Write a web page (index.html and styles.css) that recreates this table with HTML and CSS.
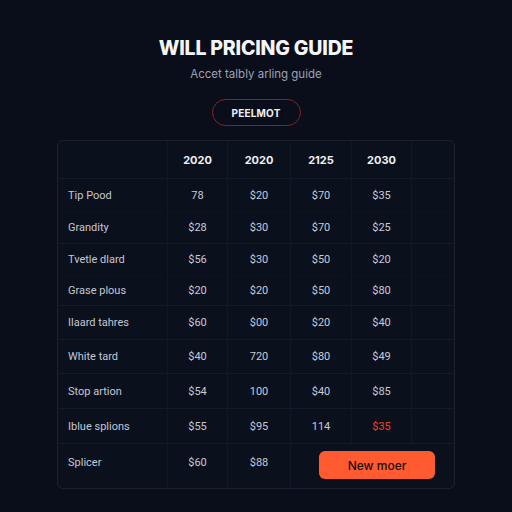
FILE: index.html
```html
<!DOCTYPE html>
<html lang="en">
<head>
<meta charset="utf-8">
<title>Will Pricing Guide</title>
<link rel="stylesheet" href="styles.css">
</head>
<body>
<main class="page">
  <header class="hero">
    <h1 class="title">WILL PRICING GUIDE</h1>
    <p class="subtitle">Accet talbly arling guide</p>
    <button class="pill" type="button">PEELMOT</button>
  </header>
  <table class="grid">
    <colgroup>
      <col class="c-label"><col class="c-a"><col class="c-b"><col class="c-c"><col class="c-d"><col class="c-e">
    </colgroup>
    <thead>
      <tr class="r-head"><th></th><th>2020</th><th>2020</th><th>2125</th><th>2030</th><th></th></tr>
    </thead>
    <tbody>
      <tr class="r1 soft"><td class="lbl">Tip Pood</td><td>78</td><td>$20</td><td>$70</td><td>$35</td><td></td></tr>
      <tr class="r2"><td class="lbl">Grandity</td><td>$28</td><td>$30</td><td>$70</td><td>$25</td><td></td></tr>
      <tr class="r3 soft"><td class="lbl">Tvetle dlard</td><td>$56</td><td>$30</td><td>$50</td><td>$20</td><td></td></tr>
      <tr class="r4"><td class="lbl">Grase plous</td><td>$20</td><td>$20</td><td>$50</td><td>$80</td><td></td></tr>
      <tr class="r5"><td class="lbl">Ilaard tahres</td><td>$60</td><td>$00</td><td>$20</td><td>$40</td><td></td></tr>
      <tr class="r6"><td class="lbl">White tard</td><td>$40</td><td>720</td><td>$80</td><td>$49</td><td></td></tr>
      <tr class="r7"><td class="lbl">Stop artion</td><td>$54</td><td>100</td><td>$40</td><td>$85</td><td></td></tr>
      <tr class="r8"><td class="lbl">Iblue splions</td><td>$55</td><td>$95</td><td>114</td><td class="alert">$35</td><td></td></tr>
      <tr class="r9"><td class="lbl">Splicer</td><td>$60</td><td>$88</td><td colspan="3" class="action"><button class="cta" type="button">New moer</button></td></tr>
    </tbody>
  </table>
</main>
</body>
</html>
```

FILE: styles.css
```css
html, body {
  margin: 0;
  padding: 0;
  background: #0a0e1a;
}

.page {
  width: 512px;
  height: 512px;
  display: flex;
  flex-direction: column;
  align-items: center;
  font-family: "Inter", "Liberation Sans", sans-serif;
  color: #e8eaf0;
}

.hero {
  display: flex;
  flex-direction: column;
  align-items: center;
  padding-top: 36px;
}

.title {
  margin: 0;
  font-size: 19.5px;
  line-height: 24px;
  font-weight: 800;
  letter-spacing: -0.2px;
  color: #f4f5f8;
}

.subtitle {
  margin: 7px 0 0;
  font-size: 11.5px;
  line-height: 14px;
  color: #9ca1b2;
}

.pill {
  margin-top: 18px;
  width: 89px;
  height: 27px;
  border: 1.5px solid #8c1d29;
  border-radius: 14px;
  background: transparent;
  color: #f0f1f4;
  font-family: "Inter", "Liberation Sans", sans-serif;
  font-size: 10px;
  font-weight: 700;
  letter-spacing: 0.2px;
  padding: 0;
}

.grid {
  margin-top: 14px;
  width: 398px;
  border-collapse: separate;
  border-spacing: 0;
  border: 1px solid #1b2130;
  border-radius: 6px;
  background: #0b101d;
  table-layout: fixed;
  font-family: "Roboto", "Liberation Sans", sans-serif;
}

.c-label { width: 110px; }
.c-a { width: 60px; }
.c-b { width: 63px; }
.c-c { width: 61px; }
.c-d { width: 60px; }
.c-e { width: 42px; }

.grid th,
.grid td {
  padding: 0;
  text-align: center;
  border-bottom: 1px solid #141a28;
  border-right: 1px solid #111726;
}

.grid th:last-child,
.grid td:last-child {
  border-right: none;
}

.grid th {
  height: 37px;
  font-family: "Inter", "Liberation Sans", sans-serif;
  font-size: 11px;
  font-weight: 700;
  color: #eef0f4;
}

.grid td {
  font-size: 11px;
  color: #c7cbd6;
}

.grid td.lbl {
  text-align: left;
  padding-left: 10px;
  color: #c4c8d3;
}

.soft td { border-bottom-color: #0e1321; }

.r1 td { height: 32px; }
.r2 td { height: 31px; }
.r3 td { height: 31px; }
.r4 td { height: 29px; }
.r5 td { height: 33px; }
.r6 td { height: 33px; }
.r7 td { height: 34px; }
.r8 td { height: 34px; }
.r9 td {
  height: 44px;
  border-bottom: none;
  vertical-align: top;
  padding-top: 12px;
  box-sizing: border-box;
}

.grid td.alert {
  color: #f0432b;
}

.grid td.action {
  text-align: left;
  padding: 7px 0 0 28px;
}

.cta {
  width: 116px;
  height: 28px;
  border: none;
  border-radius: 6px;
  background: #ff5a30;
  color: #1a0d0a;
  font-family: "Inter", "Liberation Sans", sans-serif;
  font-size: 12px;
  font-weight: 500;
  padding: 0;
}
```
